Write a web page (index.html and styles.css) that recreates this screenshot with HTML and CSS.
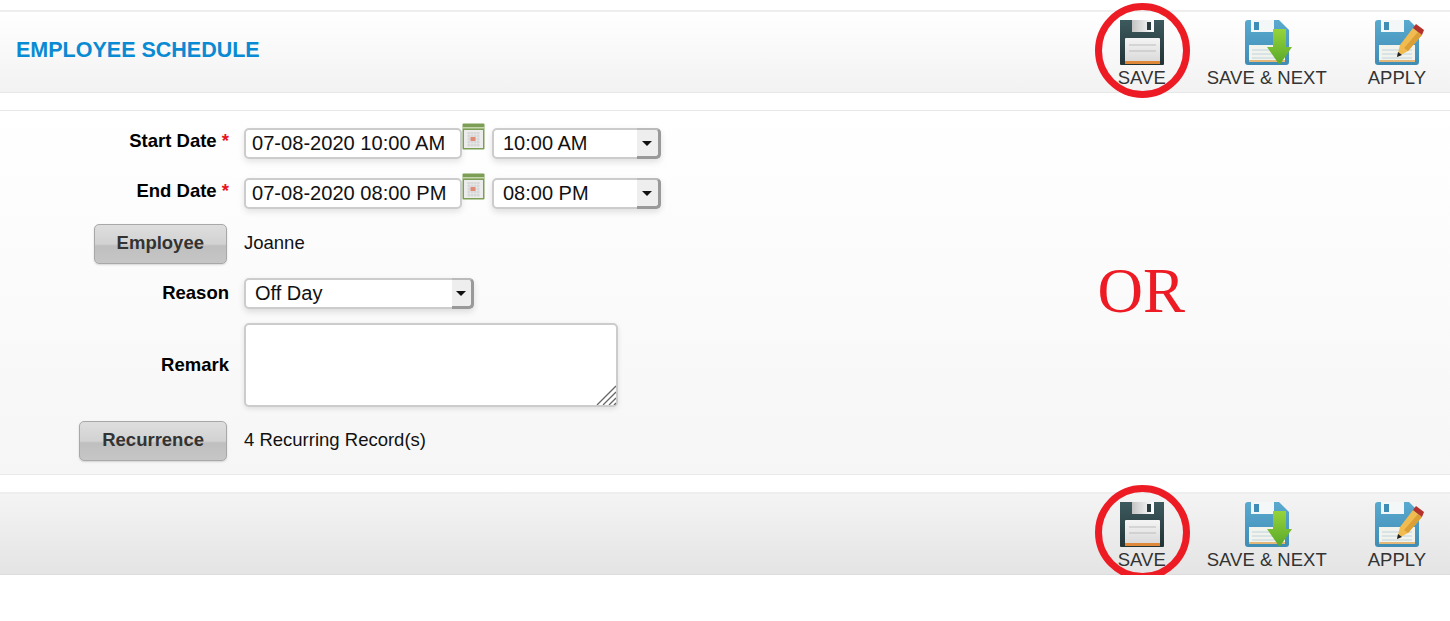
FILE: index.html
```html
<!DOCTYPE html>
<html lang="en">

  <head>
    <meta charset="UTF-8">
    <meta name="viewport" content="width=device-width, initial-scale=1.0">
    <title>Employee Schedule</title>
    <link rel="stylesheet" href="styles.css">
  </head>

  <body>

    <!-- shared icons -->
    <svg class="icon-defs" aria-hidden="true">
      <defs>
        <linearGradient id="darkBody" x1="0" y1="0" x2="0" y2="1">
          <stop offset="0" stop-color="#3d5a5e"/>
          <stop offset="1" stop-color="#223336"/>
        </linearGradient>
        <linearGradient id="blueBody" x1="0" y1="0" x2="0" y2="1">
          <stop offset="0" stop-color="#5aa9cf"/>
          <stop offset="1" stop-color="#3f8db5"/>
        </linearGradient>
        <linearGradient id="shutter" x1="0" y1="0" x2="1" y2="0">
          <stop offset="0" stop-color="#c4c4c4"/>
          <stop offset="1" stop-color="#ffffff"/>
        </linearGradient>
        <linearGradient id="labelFill" x1="0" y1="0" x2="0" y2="1">
          <stop offset="0" stop-color="#f4f4f4"/>
          <stop offset="1" stop-color="#d8d8d8"/>
        </linearGradient>
        <linearGradient id="greenArrow" x1="0" y1="0" x2="0" y2="1">
          <stop offset="0" stop-color="#96d33a"/>
          <stop offset="1" stop-color="#58a82a"/>
        </linearGradient>
        <symbol id="disk-dark" viewBox="0 0 48 47">
          <path d="M2 1h44v44a1 1 0 0 1-1 1H3a1 1 0 0 1-1-1z" fill="url(#darkBody)"/>
          <rect x="14" y="1" width="22" height="12" fill="url(#shutter)"/>
          <rect x="29" y="3" width="4" height="8" fill="#2b3c3f"/>
          <path d="M7 20a1 1 0 0 1 1-1h33a1 1 0 0 1 1 1v24H7z" fill="url(#labelFill)"/>
          <path d="M11 26h27M11 32h27" stroke="#bdbdbd" stroke-width="1"/>
          <rect x="7" y="42" width="35" height="3" fill="#e0883a"/>
        </symbol>
        <symbol id="disk-blue" viewBox="0 0 44 47">
          <path d="M0 4a3 3 0 0 1 3-3h31l10 10v32a3 3 0 0 1-3 3H3a3 3 0 0 1-3-3z" fill="url(#blueBody)"/>
          <rect x="6" y="1" width="23" height="12" fill="#f4f7f8"/>
          <rect x="9" y="3" width="5" height="8" fill="#3f8db5"/>
          <rect x="4" y="26" width="36" height="17" fill="#f3f3ee"/>
          <path d="M7 31h30M7 35h30M7 39h30" stroke="#bcd3df" stroke-width="1"/>
          <rect x="4" y="41" width="36" height="2" fill="#e4b878"/>
        </symbol>
        <symbol id="disk-next" viewBox="0 0 48 47">
          <use href="#disk-blue" x="2" width="44" height="47"/>
          <path d="M30 10h13v18h6L36.500 46 24 28h6z" fill="url(#greenArrow)"/>
        </symbol>
        <symbol id="disk-apply" viewBox="0 0 48 47">
          <use href="#disk-blue" x="2" width="44" height="47"/>
          <path d="M24 38l3-12L40 9l9 7-14 16z" fill="#f0bb50"/>
          <path d="M31 29l14-16 4 3-14 16z" fill="#dc9f35"/>
          <path d="M40 9l3-4 8 6-2 5z" fill="#b5312c"/>
          <path d="M24 38l1-5 4 3z" fill="#222"/>
        </symbol>
        <symbol id="calendar" viewBox="0 0 23 27">
          <rect x="0.500" y="0.500" width="22" height="26" rx="1" fill="#7c9f55"/>
          <rect x="0" y="4" width="23" height="1.500" fill="#c5d6ae"/>
          <rect x="2" y="7" width="19" height="18" fill="#ececec"/>
          <path d="M5 10h13M5 13h13M5 16h13M5 19h13M5 22h13M7 9v15M10 9v15M13 9v15M16 9v15" stroke="#d2d2d2" stroke-width="1"/>
          <rect x="8.500" y="14" width="5" height="4" fill="#e08a78"/>
        </symbol>
      </defs>
    </svg>

    <header class="toolbar">
      <h1 class="page-title">EMPLOYEE SCHEDULE</h1>
      <div class="actions">
        <div class="action">
          <svg class="action-icon"><use href="#disk-dark"/></svg>
          <span>SAVE</span>
          <div class="red-ring"></div>
        </div>
        <div class="action">
          <svg class="action-icon"><use href="#disk-next"/></svg>
          <span>SAVE &amp; NEXT</span>
        </div>
        <div class="action">
          <svg class="action-icon"><use href="#disk-apply"/></svg>
          <span>APPLY</span>
        </div>
      </div>
    </header>

    <main class="form-panel">
      <div class="form-rows">

        <div class="row date-row first">
          <label class="field-label">Start Date <span class="req">*</span></label>
          <div class="field">
            <input class="text-input" type="text" value="07-08-2020 10:00 AM">
            <svg class="calendar"><use href="#calendar"/></svg>
            <div class="select-box time-select">
              <span class="select-text">10:00 AM</span>
              <span class="select-arrow"></span>
            </div>
          </div>
        </div>

        <div class="row date-row">
          <label class="field-label">End Date <span class="req">*</span></label>
          <div class="field">
            <input class="text-input" type="text" value="07-08-2020 08:00 PM">
            <svg class="calendar"><use href="#calendar"/></svg>
            <div class="select-box time-select">
              <span class="select-text">08:00 PM</span>
              <span class="select-arrow"></span>
            </div>
          </div>
        </div>

        <div class="row">
          <div class="btn-cell"><button class="btn" type="button">Employee</button></div>
          <div class="field plain">Joanne</div>
        </div>

        <div class="row">
          <label class="field-label reason-label">Reason</label>
          <div class="field">
            <div class="select-box reason-select">
              <span class="select-text">Off Day</span>
              <span class="select-arrow"></span>
            </div>
          </div>
        </div>

        <div class="row">
          <label class="field-label">Remark</label>
          <div class="field">
            <div class="remark-wrap">
              <textarea class="remark"></textarea>
              <svg class="grip" viewBox="0 0 20 20">
                <path d="M1 20L20 1M7 20L20 7M13 20l7-7M18 20l2-2" stroke="#666" stroke-width="1.300"/>
              </svg>
            </div>
          </div>
        </div>

        <div class="row">
          <div class="btn-cell"><button class="btn" type="button">Recurrence</button></div>
          <div class="field plain">4 Recurring Record(s)</div>
        </div>

      </div>
      <div class="or-text">OR</div>
    </main>

    <footer class="toolbar toolbar-bottom">
      <div class="actions">
        <div class="action">
          <svg class="action-icon"><use href="#disk-dark"/></svg>
          <span>SAVE</span>
          <div class="red-ring"></div>
        </div>
        <div class="action">
          <svg class="action-icon"><use href="#disk-next"/></svg>
          <span>SAVE &amp; NEXT</span>
        </div>
        <div class="action">
          <svg class="action-icon"><use href="#disk-apply"/></svg>
          <span>APPLY</span>
        </div>
      </div>
    </footer>

  </body>

</html>
```

FILE: styles.css
```css
body {
  font-family: "Liberation Sans", Arial, sans-serif;
  font-size: 18.5px;
  color: #111;
  background-color: white;
  margin: 0;
  padding: 10px 0 0;
}

.icon-defs {
  position: absolute;
  width: 0;
  height: 0;
}

symbol {
  overflow: visible;
}

.toolbar {
  display: flex;
  justify-content: space-between;
  align-items: flex-start;
  height: 80px;
  background: linear-gradient(#ffffff, #f2f2f2);
  border-top: 2px solid #eeeeee;
  border-bottom: 1px solid #e8e8e8;
}

.toolbar-bottom {
  justify-content: flex-end;
  margin-top: 17px;
  background: linear-gradient(#f4f4f4, #e4e4e4);
  border-bottom-color: #dddddd;
}

.page-title {
  margin: 25px 0 0 16px;
  font-size: 21.5px;
  font-weight: bold;
  line-height: 26px;
  color: #0a8ad2;
}

.actions {
  display: flex;
  gap: 41px;
  padding: 7px 24px 0 0;
}

.action {
  position: relative;
  display: flex;
  flex-direction: column;
  align-items: center;
  font-size: 18.5px;
  line-height: 22px;
  color: #333;
}

.action-icon {
  display: block;
  width: 48px;
  height: 47px;
  margin-bottom: 1px;
  overflow: visible;
}

.red-ring {
  position: absolute;
  left: -23px;
  top: -16px;
  width: 81px;
  height: 81px;
  border: 7px solid #ed1c24;
  border-radius: 50%;
}

.form-panel {
  display: flex;
  margin-top: 17px;
  padding: 17px 265px 13px 0;
  background: linear-gradient(#ffffff, #f6f6f6);
  border-top: 1px solid #e8e8e8;
  border-bottom: 1px solid #eaeaea;
}

.form-rows {
  display: flex;
  flex-direction: column;
  gap: 14px;
}

.row {
  display: flex;
  align-items: center;
  gap: 15px;
}

.date-row {
  margin-bottom: 1px;
}

.date-row.first {
  margin-bottom: 5px;
}

.field-label {
  width: 229px;
  text-align: right;
  font-weight: bold;
  color: #000;
}

.date-row .field-label {
  padding-bottom: 5px;
}

.reason-label {
  padding-bottom: 2px;
}

.req {
  color: #e8141c;
}

.btn-cell {
  display: flex;
  justify-content: flex-end;
  width: 227px;
  margin-right: 2px;
}

.btn {
  height: 40px;
  padding: 0 22px 3px;
  font-family: inherit;
  font-size: 18.5px;
  font-weight: bold;
  color: #333;
  background: linear-gradient(#dedede, #d2d2d2 50%, #bfbfbf 55%, #c6c6c6);
  border: 1px solid #a8a8a8;
  border-radius: 5px;
  box-shadow: 0 1px 2px rgba(0, 0, 0, 0.15);
}

.field {
  display: flex;
  align-items: flex-start;
}

.field.plain {
  padding-bottom: 3px;
  color: #111;
}

.text-input {
  box-sizing: border-box;
  width: 218px;
  height: 31px;
  padding: 0 6px;
  font-family: inherit;
  font-size: 20.1px;
  color: #111;
  background: white;
  border: 2px solid #cccccc;
  border-radius: 5px;
  box-shadow: 0 3px 6px rgba(0, 0, 0, 0.1);
}

.calendar {
  display: block;
  width: 23px;
  height: 27px;
  margin-top: -5px;
}

.select-box {
  box-sizing: border-box;
  display: flex;
  justify-content: space-between;
  height: 31px;
  font-size: 20px;
  line-height: 27px;
  color: #111;
  background: white;
  border: 2px solid #cccccc;
  border-radius: 5px;
  box-shadow: 0 3px 6px rgba(0, 0, 0, 0.12);
}

.time-select {
  width: 169px;
  margin-left: 7px;
}

.reason-select {
  width: 230px;
}

.select-text {
  padding-left: 9px;
}

.select-arrow {
  position: relative;
  box-sizing: border-box;
  width: 24px;
  margin: -2px -2px -2px 0;
  background: #eeeeee;
  border-top: 2px solid #bbbbbb;
  border-right: 3px solid #999999;
  border-bottom: 3px solid #999999;
  border-radius: 0 5px 5px 0;
}

.select-arrow::after {
  content: "";
  position: absolute;
  left: 5px;
  top: 11px;
  border-left: 5px solid transparent;
  border-right: 5px solid transparent;
  border-top: 5px solid #111;
}

.reason-select .select-arrow {
  width: 22px;
}

.reason-select .select-arrow::after {
  left: 4px;
}

.remark-wrap {
  position: relative;
  height: 84px;
}

.remark {
  display: block;
  box-sizing: border-box;
  width: 374px;
  height: 84px;
  background: white;
  border: 2px solid #cccccc;
  border-radius: 5px;
  box-shadow: 0 2px 5px rgba(0, 0, 0, 0.1);
  resize: none;
}

.grip {
  position: absolute;
  right: 2px;
  bottom: 2px;
  width: 20px;
  height: 20px;
}

.or-text {
  align-self: center;
  margin: 0 0 7px auto;
  font-family: "Liberation Serif", "Times New Roman", serif;
  font-size: 63px;
  line-height: 70px;
  color: #ed1c24;
}
```
